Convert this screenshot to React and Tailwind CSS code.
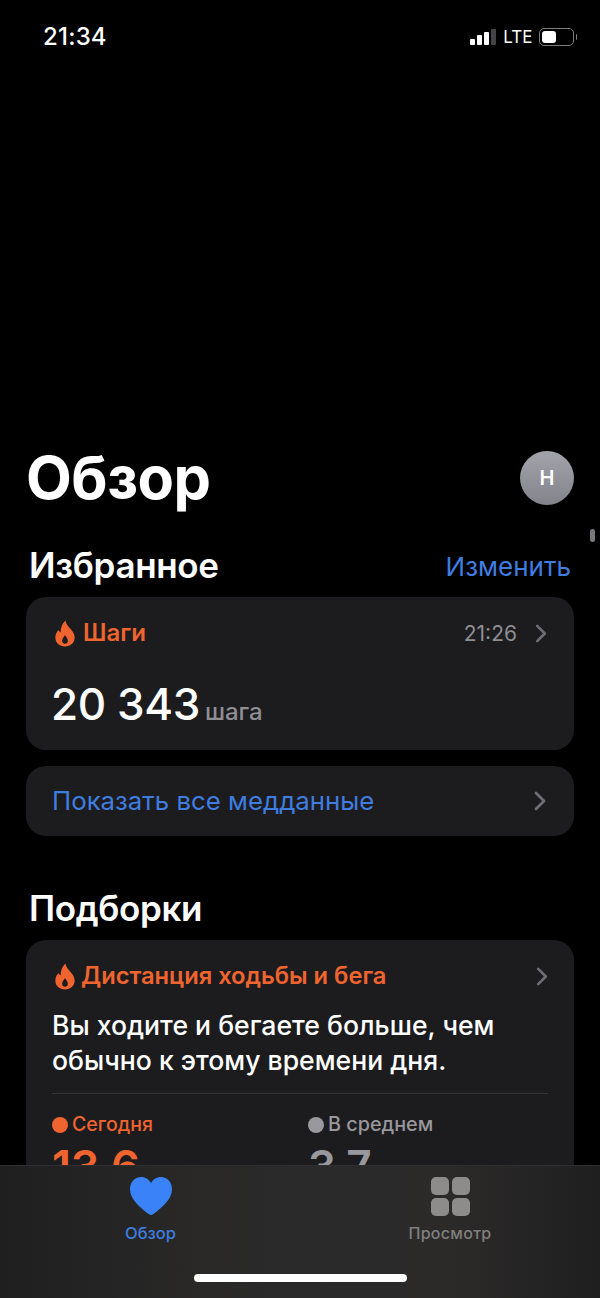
import React from "react";

const Flame = ({ className }) => (
  <svg viewBox="0 0 22 28" className={className}>
    <path
      fillRule="evenodd"
      fill="#f0642f"
      d="M11.5 0.5C12 4.5 14.5 6.5 17 9.5C19.5 12.5 21 15 21 18.2C21 23.8 16.6 27.5 11 27.5C5.4 27.5 1 23.8 1 18.2C1 15 2.2 12.6 4.2 10.4C4.8 11.6 5.5 12.4 6.5 13C6.3 8.5 8 3.5 11.5 0.5ZM11 15.5C9.6 18 8 19.6 8 21.6C8 23.4 9.3 24.7 11 24.7C12.7 24.7 14 23.4 14 21.6C14 19.6 12.4 18 11 15.5Z"
    />
  </svg>
);

const Chevron = ({ className }) => (
  <svg viewBox="0 0 12 20" className={className} fill="none">
    <path d="M2 2L10 10L2 18" stroke="#6e6e72" strokeWidth="2.8" strokeLinecap="round" strokeLinejoin="round" />
  </svg>
);

export default function App() {
  return (
    <div className="relative h-[1298px] w-[600px] overflow-hidden bg-black text-white font-['Inter','Liberation_Sans',sans-serif]">
      {/* status bar */}
      <div className="flex h-[74px] items-center justify-between pl-[43px] pr-[23px]">
        <span className="text-[24px] font-medium leading-none tracking-[0.2px]">21:34</span>
        <div className="flex items-center">
          <div className="flex items-end gap-[2px]">
            <span className="h-[6px] w-[5px] rounded-[1px] bg-white" />
            <span className="h-[10px] w-[5px] rounded-[1px] bg-white" />
            <span className="h-[13px] w-[5px] rounded-[1px] bg-white" />
            <span className="h-[16px] w-[5px] rounded-[1px] bg-[#444446]" />
          </div>
          <span className="ml-[7px] text-[17px] leading-none text-white">LTE</span>
          <div className="ml-[6px] flex h-[18px] w-[35px] items-center rounded-[5px] border-[1.5px] border-[#7d7d80] p-[2px]">
            <span className="h-[12px] w-[14px] rounded-[3px] bg-white" />
          </div>
          <span className="ml-[2px] h-[6px] w-[1.5px] rounded-r-full bg-[#7d7d80]" />
        </div>
      </div>

      {/* large title */}
      <div className="mt-[377px] flex h-[54px] items-center justify-between pl-[26px] pr-[26px]">
        <h1 className="text-[59.5px] font-bold leading-none tracking-[-0.5px]">Обзор</h1>
        <div className="flex h-[54px] w-[54px] items-center justify-center rounded-full bg-gradient-to-b from-[#a3a3ab] to-[#83838b] text-[20px] font-semibold">
          Н
        </div>
      </div>

      {/* favourites */}
      <div className="mt-[42px] flex h-[36px] items-center justify-between pl-[29px] pr-[29px]">
        <h2 className="text-[35px] font-semibold leading-none tracking-[-0.35px]">Избранное</h2>
        <span className="mt-[4px] text-[26px] leading-none text-[#3f7de0]">Изменить</span>
      </div>

      <div className="mx-[26px] mt-[14px] h-[153px] rounded-[20px] bg-[#1c1c1e] pl-[26px] pr-[26px] pt-[21px]">
        <div className="flex h-[30px] items-center justify-between">
          <div className="flex items-center gap-[7px] pl-[2px]">
            <Flame className="h-[27px] w-[22px]" />
            <span className="text-[24px] font-semibold leading-none text-[#f0642f]">Шаги</span>
          </div>
          <div className="flex items-center gap-[18px] pr-[1px]">
            <span className="text-[21px] leading-none text-[#8e8e93]">21:26</span>
            <Chevron className="h-[19px] w-[12px]" />
          </div>
        </div>
        <div className="-ml-[1px] mt-[26px] flex items-baseline gap-[5px]">
          <span className="text-[44px] font-medium leading-[60px] tracking-[-0.4px]">20 343</span>
          <span className="text-[24px] font-medium leading-none text-[#8e8e93]">шага</span>
        </div>
      </div>

      <div className="mx-[26px] mt-[16px] flex h-[70px] items-center justify-between rounded-[20px] bg-[#1c1c1e] pl-[26px] pr-[28px]">
        <span className="text-[25.8px] leading-none text-[#3f7de0]">Показать все медданные</span>
        <Chevron className="h-[20px] w-[12px]" />
      </div>

      {/* highlights */}
      <h2 className="mt-[54px] h-[37px] pl-[29px] text-[35px] font-semibold leading-[36px] tracking-[-0.35px]">Подборки</h2>

      <div className="mx-[26px] mt-[13px] h-[300px] rounded-[20px] bg-[#1c1c1e] pl-[26px] pr-[26px] pt-[21px]">
        <div className="flex h-[30px] items-center justify-between">
          <div className="flex items-center gap-[5px] pl-[2px]">
            <Flame className="h-[27px] w-[22px]" />
            <span className="text-[23.7px] font-semibold leading-none text-[#f0642f]">Дистанция ходьбы и бега</span>
          </div>
          <Chevron className="h-[19px] w-[12px]" />
        </div>
        <p className="mt-[17px] text-[26.6px] font-medium leading-[35px] text-white">
          Вы ходите и бегаете больше, чем
          <br />
          обычно к этому времени дня.
        </p>
        <div className="mt-[15px] h-px bg-[#333335]" />
        <div className="mt-[21px] flex">
          <div className="w-[256px]">
            <div className="flex items-center gap-[4px]">
              <span className="h-[16px] w-[16px] rounded-full bg-[#f0642f]" />
              <span className="text-[19.5px] font-medium leading-none text-[#f0642f]">Сегодня</span>
            </div>
            <div className="mt-[9px] text-[45px] font-semibold leading-none tracking-[-0.3px] text-[#f0642f]">13,6</div>
          </div>
          <div>
            <div className="flex items-center gap-[4px]">
              <span className="h-[16px] w-[16px] rounded-full bg-[#98989d]" />
              <span className="text-[19.8px] font-medium leading-none text-[#98989d]">В среднем</span>
            </div>
            <div className="mt-[9px] text-[44px] font-semibold leading-none tracking-[-1px] text-[#98989d]">3,7</div>
          </div>
        </div>
      </div>

      {/* scroll indicator */}
      <div className="absolute left-[590px] top-[529px] h-[13px] w-[5px] rounded-full bg-[#77777b]" />

      {/* tab bar */}
      <div className="absolute bottom-0 left-0 right-0 h-[133px] border-t border-[#303032] bg-[linear-gradient(90deg,#1f1f20_0%,#2a2928_35%,#2a2a2b_55%,#2c2a29_75%,#1f1f20_100%)]">
        <div className="flex">
          <div className="flex w-[300px] flex-col items-center pl-[1px] pt-[11px]">
            <svg viewBox="0 0 42 38" className="h-[38px] w-[42px]">
              <path
                fill="#3a82f7"
                d="M21 38C19.8 38 18.8 37.3 17.5 36.3C9 29.8 0 21.5 0 12C0 5 4.8 0 11 0C15.3 0 18.9 2.2 21 6C23.1 2.2 26.7 0 31 0C37.2 0 42 5 42 12C42 21.5 33 29.8 24.5 36.3C23.2 37.3 22.2 38 21 38Z"
              />
            </svg>
            <span className="mt-[8px] text-[16.5px] font-medium leading-[20px] text-[#3f7de0]">Обзор</span>
          </div>
          <div className="flex w-[300px] flex-col items-center pt-[11px]">
            <div className="grid h-[39px] w-[39px] grid-cols-2 gap-[3px]">
              <span className="rounded-[5px] bg-[#8e8c8b]" />
              <span className="rounded-[5px] bg-[#8e8c8b]" />
              <span className="rounded-[5px] bg-[#8e8c8b]" />
              <span className="rounded-[5px] bg-[#8e8c8b]" />
            </div>
            <span className="mt-[7px] text-[16px] font-medium leading-[20px] tracking-[0.3px] text-[#807f7e]">Просмотр</span>
          </div>
        </div>
        <div className="ml-[194px] mt-[31px] h-[8px] w-[213px] rounded-full bg-white" />
      </div>
    </div>
  );
}
